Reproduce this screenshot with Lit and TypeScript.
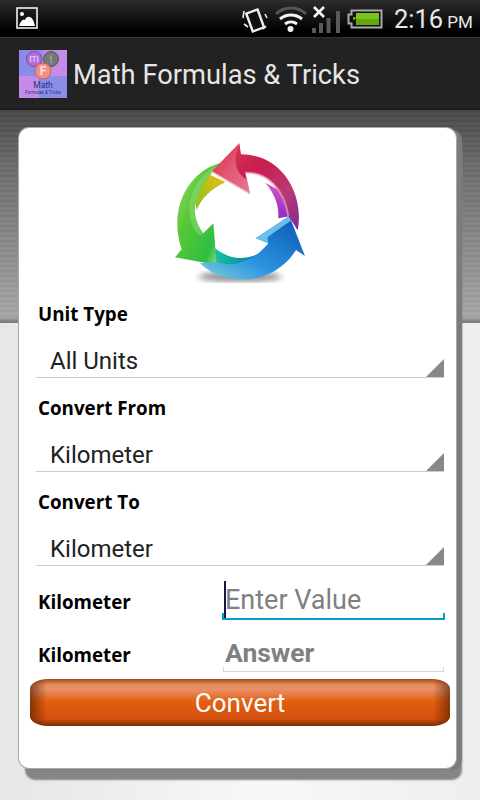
import { LitElement, html, css, svg } from "lit";
import { customElement } from "lit/decorators.js";

const arrows = svg`
  <defs>
    <linearGradient id="r" x1="0" y1="0" x2="1" y2="1">
      <stop offset="0" stop-color="#e0405c"/><stop offset=".4" stop-color="#c81e4c"/><stop offset=".72" stop-color="#b83a74"/><stop offset="1" stop-color="#7e2a98"/>
    </linearGradient>
    <linearGradient id="rh" x1="0" y1="0" x2="1" y2="1">
      <stop offset="0" stop-color="#dc1c34"/><stop offset=".5" stop-color="#e8687e"/><stop offset="1" stop-color="#f09ab0"/>
    </linearGradient>
    <linearGradient id="g" x1="0" y1="0" x2="1" y2="1">
      <stop offset="0" stop-color="#a8dc70"/><stop offset=".4" stop-color="#56c836"/><stop offset=".8" stop-color="#2fbe44"/><stop offset="1" stop-color="#a8e498"/>
    </linearGradient>
    <linearGradient id="b" x1="0" y1="1" x2="1" y2="0">
      <stop offset="0" stop-color="#7ed0dc"/><stop offset=".4" stop-color="#2a94e0"/><stop offset="1" stop-color="#0a54b0"/>
    </linearGradient>
    <linearGradient id="y" x1="1" y1="0" x2="0" y2="1">
      <stop offset="0" stop-color="#f0bc10"/><stop offset="1" stop-color="#88c020"/>
    </linearGradient>
    <linearGradient id="t" x1="0" y1="0" x2="1" y2="0">
      <stop offset="0" stop-color="#18c8a4"/><stop offset="1" stop-color="#067f9a"/>
    </linearGradient>
    <linearGradient id="p" x1="0" y1="0" x2="0" y2="1">
      <stop offset="0" stop-color="#d858c8"/><stop offset="1" stop-color="#7a18c4"/>
    </linearGradient>
    <filter id="s"><feGaussianBlur stdDeviation="10"/></filter>
  </defs>
  <ellipse cx="240" cy="440" rx="125" ry="14" fill="#666" opacity=".8" filter="url(#s)"/>
  <path d="M130 125 L195 155 L190 160 C150 180 125 205 110 240 L100 190 Z" fill="url(#y)"/>
  <path d="M165 355 C210 390 250 390 295 372 L260 430 L150 415 Z" fill="url(#t)"/>
  <path d="M315 158 C345 190 358 230 355 265 L392 258 L412 300 L404 205 Z" fill="url(#p)"/>
  <path d="M185 98 C90 120 22 230 65 358 L45 382 L170 405 L160 280 L130 310 C100 270 100 230 112 205 C120 170 150 130 185 98 Z" fill="url(#g)"/>
  <path d="M185 98 C130 120 85 185 88 245 C90 280 105 300 118 318 L130 310 C100 270 100 230 112 205 C120 170 150 130 185 98 Z" fill="#d4f0b4" opacity=".25"/>
  <path d="M120 400 C190 470 340 470 408 360 L435 378 L388 258 L287 325 L325 340 C290 385 230 415 170 397 Z" fill="url(#b)"/>
  <path d="M287 325 L388 258 L392 272 L322 322 L325 340 Z" fill="#78ccf4" opacity=".85"/>
  <path d="M243 73 L238 40 L155 125 L270 192 L256 128 C325 125 372 180 385 258 L413 300 C432 210 380 75 243 73 Z" fill="url(#r)"/>
  <path d="M238 40 L155 125 L270 192 L262 150 C230 130 215 100 238 40 Z" fill="url(#rh)" opacity=".75"/>
  <path d="M256 128 C325 125 372 180 385 258" fill="none" stroke="#f49cc0" stroke-width="6" opacity=".7"/>
  <path d="M155 125 L270 192" stroke="#fbc0d0" stroke-width="4"/>
`;

const statusIcons = html`
  <svg class="st" width="250" height="37" viewBox="0 0 250 37">
    <g fill="none" stroke="#eee">
      <rect x="19" y="11" width="12" height="19" transform="rotate(-20 25 20)" fill="#111" stroke-width="2.400"/>
      <path d="M14 11 l-1 7 M18 27 l-4 -3 M35 14 l2 4 M33 29 l3 -3" stroke-width="1.600"/>
    </g>
    <path d="M46 14 A22 22 0 0 1 76 14" fill="none" stroke="#555" stroke-width="3"/>
    <path d="M50 19 A17 17 0 0 1 72 19" fill="none" stroke="#f4f4f4" stroke-width="3"/>
    <path d="M55 24 A10 10 0 0 1 67 24" fill="none" stroke="#f4f4f4" stroke-width="3"/>
    <circle cx="60.500" cy="29" r="3" fill="#f4f4f4"/>
    <path d="M84 7 L94 17 M94 7 L84 17" stroke="#f4f4f4" stroke-width="2.600"/>
    <path d="M82 28h4v5h-4z M89 23h4v10h-4z M96.500 18h4v15h-4z M106 11h4v22h-4z" fill="#5a5a5a"/>
    <path d="M121.500 10.500 h30 v17 h-30 v-4 h-3 v-9 h3 z" fill="#111" stroke="#aaa" stroke-width="2"/>
    <rect x="126" y="13" width="23" height="12" fill="#5ea80e"/>
    <rect x="126" y="13" width="23" height="6" fill="#7cc41a"/>
    <path d="M123 17h3l-1 3 h-2z" fill="#5ea80e"/>
  </svg>
`;

const logo = html`
  <svg class="logo" width="48" height="48" viewBox="0 0 48 48">
    <rect width="48" height="48" fill="#8c8ce8"/>
    <rect x="24" width="24" height="26" fill="#c48ce8"/>
    <rect y="26" width="20" height="22" fill="#c48ce8"/>
    <circle cx="15" cy="9" r="7.500" fill="#b070d8" stroke="#7a4aa8"/>
    <circle cx="32" cy="9" r="7.500" fill="#777" stroke="#555"/>
    <circle cx="24" cy="21" r="8" fill="#f09080" stroke="#c06858"/>
    <text x="15" y="12" font-size="11" fill="#e8d0f8" text-anchor="middle" font-family="Roboto">m</text>
    <text x="32" y="13" font-size="11" fill="#aaa" text-anchor="middle" font-family="Roboto">t</text>
    <text x="24" y="25" font-size="12" font-weight="700" fill="#fde" text-anchor="middle" font-family="Roboto">F</text>
    <text x="24" y="38" font-size="8.500" fill="#123a80" text-anchor="middle" font-family="Roboto">Math</text>
    <text x="24" y="44" font-size="4.500" fill="#123a80" text-anchor="middle" font-family="Roboto">Formulas &amp; Tricks</text>
  </svg>
`;

@customElement("app-root")
export class AppRoot extends LitElement {
  static styles = css`
    :host { display: block; width: 480px; height: 800px; overflow: hidden; font-family: Roboto, sans-serif; }
    .status { height: 37px; display: flex; align-items: center; background: linear-gradient(#2c2c2c, #000 85%); padding-left: 16px; box-sizing: border-box; }
    .pic { width: 22px; height: 22px; margin: -1px 192px 0 0; display: block; flex: none; }
    .st { display: block; flex: none; margin-right: -86px; }
    .clock { color: #e8e8e8; font-size: 25.500px; white-space: nowrap; flex: none; }
    .clock small { font-size: 17px; margin-left: 4px; }
    .bar { height: 73px; background: #222; border-top: 1px solid #333; border-bottom: 1px solid #1a1a1a; box-sizing: border-box; display: flex; align-items: center; padding-left: 19px; gap: 6px; }
    .logo { display: block; flex: none; margin-top: 1px; }
    .title { color: #e6e6e6; font-size: 27.300px; padding-top: 2px; }
    .page { height: 690px; box-sizing: border-box; padding: 18px 0 0 19px;
      background:
        repeating-linear-gradient(rgba(0,0,0,.03) 0 2px, rgba(255,255,255,.03) 2px 5px) 0 0 / 100% 212px no-repeat,
        linear-gradient(#484848, #6a6a6a 25%, #a6a6a6 97%, #787878 100%) 0 0 / 100% 213px no-repeat,
        linear-gradient(90deg, #e6e6e6, #f8f8f8 55%, #eee); }
    .card { width: 437px; height: 640px; box-sizing: border-box; background: #fff; border-radius: 10px; box-shadow: 0 0 0 1px #a8a8a8, 6px 2px 1px 0 #7c7c7c, 6px 12px 2px 0 #858585; padding: 2px 0 0 17px; }
    .hero { display: block; margin-left: 124px; width: 160px; height: 160px; }
    .lbl { height: 48px; display: flex; align-items: center; padding: 0 0 1px 2px; box-sizing: border-box; font: 700 18.800px "Open Sans", sans-serif; color: #000; }
    .spin { height: 40px; width: 408px; box-sizing: border-box; border-bottom: 1px solid #ccc; padding: 7px 0 0 14px; font-size: 24px; line-height: 32px; color: #222; position: relative; margin-bottom: 6px; }
    .tri { position: absolute; right: 0; bottom: 0; width: 0; height: 0; border-style: solid; border-width: 0 0 18px 18px; border-color: transparent transparent #888 transparent; }
    .row { display: flex; align-items: stretch; padding-left: 2px; }
    .row .lbl { width: 184px; padding: 0; flex: none; }
    .r1 { height: 48px; }
    .r1 .lbl { padding-top: 11px; }
    .r2 { height: 52px; }
    .r2 .lbl { padding-top: 22px; }
    .inp { width: 223px; box-sizing: border-box; position: relative; font-size: 27px; color: #808080; display: flex; align-items: flex-end; line-height: 36px; }
    .inp.on { border: solid #0a9ccb; border-width: 0 2px 2px; border-image: linear-gradient(transparent 0 calc(100% - 6px), #0a9ccb calc(100% - 6px)) 1; padding: 0 0 0 1px; }
    .inp.off { border: solid #d8d8d8; border-width: 0 1px 1px; border-image: linear-gradient(transparent 0 calc(100% - 5px), #d8d8d8 calc(100% - 5px)) 1; font-weight: 700; font-size: 26.500px; padding: 0 0 0 1px; margin-left: 1px; width: 221px; }
    .caret { position: absolute; left: 0; bottom: 0; width: 1.500px; height: 37px; background: #0a1a50; }
    .btn { width: 420px; height: 47px; margin: 7px 0 0 -6px; display: flex; align-items: center; justify-content: center; color: #fff; font-size: 26px; position: relative; border-radius: 18px / 10px; overflow: hidden;
      background: linear-gradient(#9a4a20 0, #e48a5c 12%, #e89068 22%, #e25e10 48%, #d4500e 85%, #7a2c04 100%); }
    .btn::before { content: ""; position: absolute; inset: 0; background: linear-gradient(90deg, rgba(90,30,0,.65), transparent 4%, transparent 96%, rgba(90,30,0,.65)); }
    .btn span { position: relative; }
  `;

  render() {
    return html`
      <div class="status">
        <svg class="pic" viewBox="0 0 22 22">
          <rect x="1" y="1" width="20" height="20" fill="none" stroke="#fff" stroke-width="1.500"/>
          <circle cx="6" cy="7" r="2" fill="#fff"/>
          <path d="M3 19 C5 13 7 12 9 13 C11 8 17 8 19 19 Z" fill="#fff"/>
        </svg>
        ${statusIcons}<span class="clock">2:16<small>PM</small></span>
      </div>
      <div class="bar">${logo}<span class="title">Math Formulas &amp; Tricks</span></div>
      <div class="page">
        <div class="card">
          <svg class="hero" viewBox="0 0 480 480">${arrows}</svg>
          <div class="lbl">Unit Type</div>
          <div class="spin">All Units<i class="tri"></i></div>
          <div class="lbl">Convert From</div>
          <div class="spin">Kilometer<i class="tri"></i></div>
          <div class="lbl">Convert To</div>
          <div class="spin">Kilometer<i class="tri"></i></div>
          <div class="row r1"><div class="lbl">Kilometer</div><div class="inp on"><i class="caret"></i>Enter Value</div></div>
          <div class="row r2"><div class="lbl">Kilometer</div><div class="inp off">Answer</div></div>
          <div class="btn"><span>Convert</span></div>
        </div>
      </div>
    `;
  }
}
